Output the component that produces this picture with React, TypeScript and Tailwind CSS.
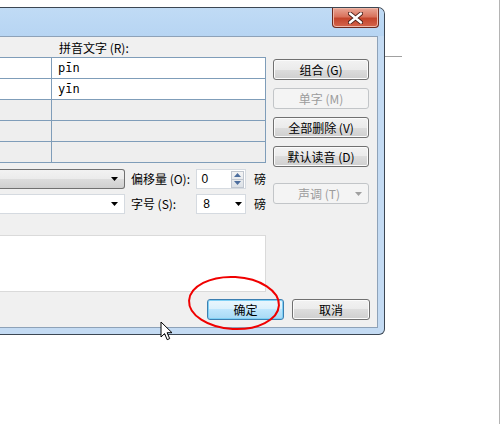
import { ReactNode } from "react";

const face =
  "h-[21px] rounded-[3px] border border-[#707070] bg-[linear-gradient(#f2f2f2,#ebebeb_50%,#dddddd_50%,#cfcfcf)] shadow-[inset_0_0_0_1px_#fbfbfb] text-[12px] leading-none text-black flex items-center justify-center";
const btn = `${face} w-[96px]`;
const btnOff =
  "h-[21px] w-[96px] rounded-[3px] border border-[#c2c5c8] bg-[#f4f4f4] text-[12px] leading-none text-[#9c9c9c] flex items-center";

function Arrow({ color = "#000" }: { color?: string }) {
  return (
    <svg width="7" height="4" viewBox="0 0 7 4">
      <path d="M0 0h7L3.5 4z" fill={color} />
    </svg>
  );
}

function Row({ right, white }: { right?: ReactNode; white?: boolean }) {
  return (
    <div className={`flex h-[21px] border-t border-[#7f9db9] ${white ? "bg-white" : "bg-[#eeeeee]"}`}>
      <div className="w-[52px] border-r border-[#7f9db9]" />
      <div className="flex-1 pl-[6px] flex items-center text-[12px] font-['DejaVu_Sans_Mono',monospace]">{right}</div>
    </div>
  );
}

function CloseButton() {
  return (
    <div className="w-[47px] h-[20px] rounded-b-[4px] border border-t-0 border-[#6d2a1e] bg-[linear-gradient(#e9a797,#d9735d_45%,#c4452c_55%,#d4654c)] shadow-[inset_0_0_0_1px_#f0b8a8] flex items-center justify-center">
      <svg width="15" height="12" viewBox="0 0 15 12">
        <path d="M2 1.5 13 10.5M13 1.5 2 10.5" stroke="#4a1f18" strokeWidth="4.2" strokeLinecap="round" />
        <path d="M2 1.5 13 10.5M13 1.5 2 10.5" stroke="#ffffff" strokeWidth="2.4" strokeLinecap="round" />
      </svg>
    </div>
  );
}

export default function App() {
  return (
    <div className="relative w-[500px] h-[424px] bg-white overflow-hidden font-['Noto_Sans_CJK_SC',sans-serif]">
      <div className="absolute left-[385px] top-[56px] w-[17px] h-px bg-[#a0a0a0]" />
      <div className="absolute right-0 top-0 w-px h-full bg-[#b4b4b4]" />

      <div className="absolute left-0 top-[7px] w-[385px] h-[328px] border-t border-r border-b border-[#3c4753] rounded-tr-[7px] rounded-br-[6px] bg-[#c4dbf3] overflow-hidden">
        <div className="h-[28px] flex justify-end pr-[5px] bg-[linear-gradient(#c0dbf5,#b7d5f3)]">
          <CloseButton />
        </div>
        <div className="flex">
          <div className="w-[378px] h-[292px] border-t border-r border-b border-[#8ea2b8] bg-[#f0f0f0] flex flex-col">
            <div className="flex">
              <div className="w-[266px] flex flex-col">
                <div className="h-[20px] pl-[59px] flex items-end pb-[2px] text-[12px] leading-[14px]">拼音文字 (R):</div>
                <div className="border-r border-b border-[#7f9db9]">
                  <Row white right="pīn" />
                  <Row white right="yīn" />
                  <Row />
                  <Row />
                  <Row />
                </div>
                <div className="mt-[6px] h-[20px] flex items-center">
                  <div className="w-[126px] h-[20px] rounded-r-[3px] border border-l-0 border-[#707070] bg-[linear-gradient(#f2f2f2,#ebebeb_50%,#dddddd_50%,#cfcfcf)] flex items-center justify-end pr-[6px]">
                    <Arrow />
                  </div>
                  <span className="ml-[6px] w-[66px] text-[12px] leading-none">偏移量 (O):</span>
                  <div className="w-[50px] h-[20px] border border-[#d5dae0] bg-white flex items-center justify-between pl-[4px] pr-[1px]">
                    <span className="text-[12px] font-['Liberation_Sans',sans-serif]">0</span>
                    <div className="w-[13px] h-[17px] flex flex-col border border-[#c0c6cf] bg-[linear-gradient(#f3f3f3,#dde2e8)]">
                      <div className="flex-1 flex items-center justify-center border-b border-[#c0c6cf]">
                        <svg width="7" height="4" viewBox="0 0 7 4"><path d="M3.5 0 7 4H0z" fill="#4d6e9e" /></svg>
                      </div>
                      <div className="flex-1 flex items-center justify-center">
                        <svg width="7" height="4" viewBox="0 0 7 4"><path d="M0 0h7L3.5 4z" fill="#4d6e9e" /></svg>
                      </div>
                    </div>
                  </div>
                  <span className="ml-[8px] text-[12px] leading-none">磅</span>
                </div>
                <div className="mt-[5px] h-[20px] flex items-center">
                  <div className="w-[126px] h-[20px] border border-l-0 border-[#d5dae0] bg-white flex items-center justify-end pr-[6px]">
                    <Arrow />
                  </div>
                  <span className="ml-[6px] w-[66px] text-[12px] leading-none">字号 (S):</span>
                  <div className="w-[50px] h-[20px] border border-[#d5dae0] bg-white flex items-center justify-between pl-[6px] pr-[3px]">
                    <span className="text-[12px] font-['Liberation_Sans',sans-serif]">8</span>
                    <Arrow />
                  </div>
                  <span className="ml-[8px] text-[12px] leading-none">磅</span>
                </div>
                <div className="mt-[21px] h-[57px] border border-l-0 border-[#dadada] bg-white" />
              </div>
              <div className="ml-[7px] w-[96px] pt-[22px] flex flex-col gap-[8px]">
                <div className={btn}>组合 (G)</div>
                <div className={`${btnOff} justify-center`}>单字 (M)</div>
                <div className={btn}>全部删除 (V)</div>
                <div className={btn}>默认读音 (D)</div>
                <div className={`${btnOff} mt-[8px] justify-between pl-[24px] pr-[6px]`}>
                  <span>声调 (T)</span>
                  <Arrow color="#a0a0a0" />
                </div>
              </div>
            </div>
            <div className="mt-[7px] flex justify-end gap-[8px] pr-[7px]">
              <div className="h-[21px] w-[77px] rounded-[3px] border border-[#3c7fb1] bg-[linear-gradient(#eaf6fd,#d9f0fc_50%,#bee6fd_50%,#a7d9f5)] shadow-[inset_0_0_0_1px_#7fd0f5] text-[12px] leading-none flex items-center justify-center">
                确定
              </div>
              <div className={`${face} w-[78px]`}>取消</div>
            </div>
          </div>
        </div>
      </div>

      <svg className="absolute left-[186px] top-[273px]" width="100" height="62" viewBox="0 0 100 62">
        <ellipse cx="48" cy="30" rx="45" ry="26" transform="rotate(3 48 30)" fill="none" stroke="#f00000" strokeWidth="2" />
      </svg>

      <svg className="absolute left-[160px] top-[321px]" width="14" height="21" viewBox="0 0 14 21">
        <path d="M1 1v15l3.6-3.4 2.6 6.1 2.5-1.1-2.6-5.9H12z" fill="#fff" stroke="#000" strokeWidth="1" strokeLinejoin="miter" />
      </svg>
    </div>
  );
}
